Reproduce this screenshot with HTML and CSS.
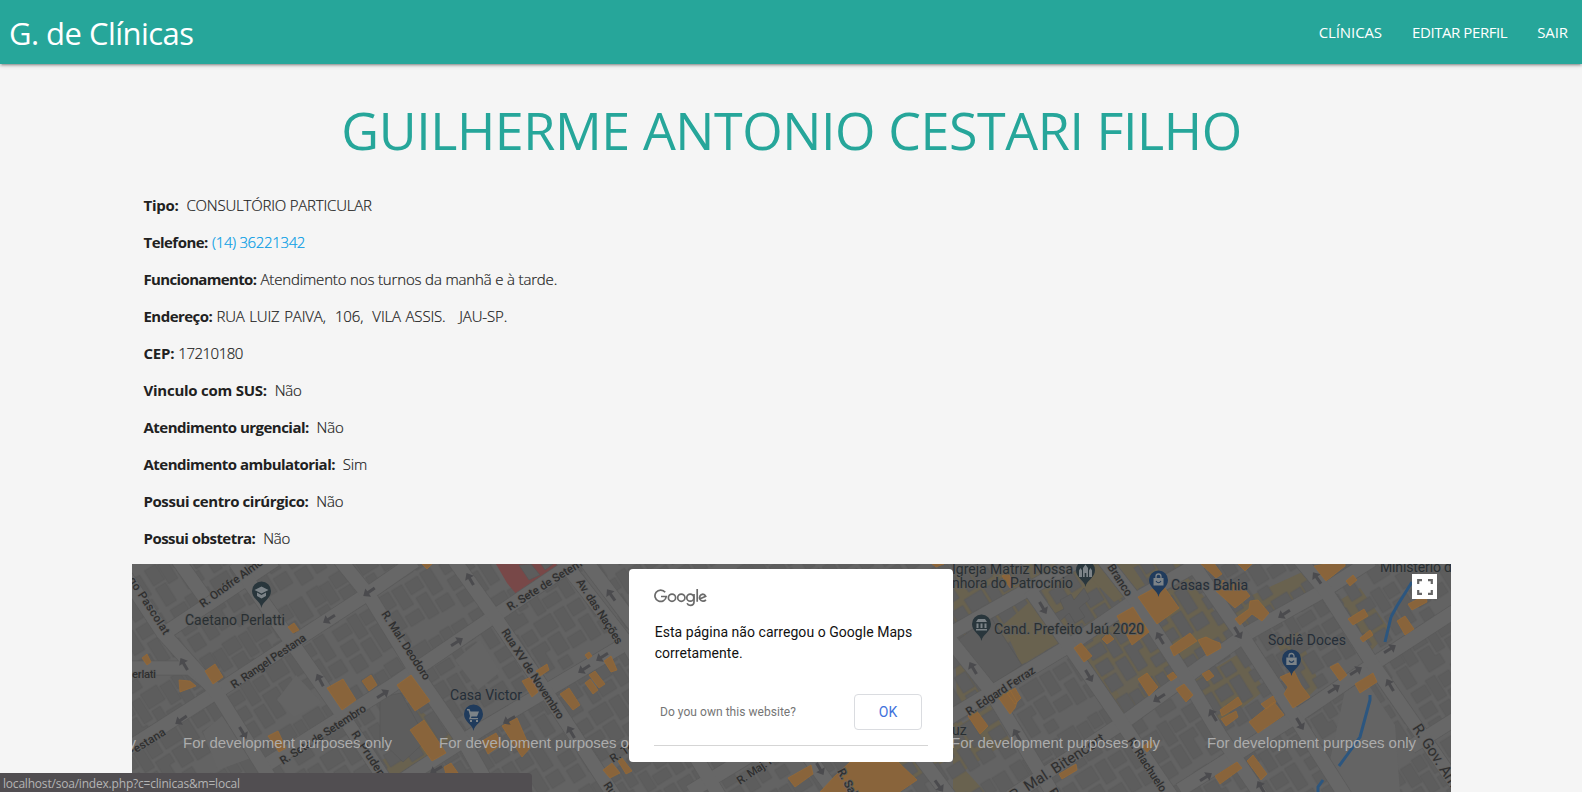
FILE: index.html
```
<!DOCTYPE html>
<html lang="pt-BR">
<head>
<meta charset="utf-8">
<title>G. de Clínicas</title>
<link rel="stylesheet" href="styles.css">
</head>
<body>
<nav class="navbar">
  <a class="brand">G. de Clínicas</a>
  <div class="links"><a class="l1">CLÍNICAS</a><a class="l2">EDITAR PERFIL</a><a class="l3">SAIR</a></div>
</nav>
<main class="container">
  <h2 class="title">GUILHERME ANTONIO CESTARI FILHO</h2>
  <div class="details">
    <p><b class="short">Tipo:</b>&nbsp; <span class="caps">CONSULTÓRIO PARTICULAR</span></p>
    <p><b>Telefone:</b> <a class="phone">(14) 36221342</a></p>
    <p><b class="long">Funcionamento:</b> <span>Atendimento nos turnos da manhã e à tarde.</span></p>
    <p><b>Endereço:</b> <span class="caps address">RUA LUIZ PAIVA,&nbsp; 106,&nbsp; VILA ASSIS. &nbsp; JAU-SP.</span></p>
    <p><b class="short">CEP:</b> <span class="num">17210180</span></p>
    <p><b class="short">Vinculo com SUS:</b>&nbsp; <span>Não</span></p>
    <p><b>Atendimento urgencial:</b>&nbsp; <span>Não</span></p>
    <p><b>Atendimento ambulatorial:</b>&nbsp; <span>Sim</span></p>
    <p><b class="mid">Possui centro cirúrgico:</b>&nbsp; <span>Não</span></p>
    <p><b>Possui obstetra:</b>&nbsp; <span>Não</span></p>
  </div>
  <section class="map">
    <svg class="tiles" viewBox="132 564 1319 228" width="1319" height="228">
      <defs>
        <pattern id="lots" width="126" height="104" patternUnits="userSpaceOnUse" patternTransform="translate(140 570) rotate(-32)">
          <path class="lot" d="M3 3h13v18h-13zM17 5h11v22h-11zM30 2h16v14h-16zM48 4h10v25h-10zM60 2h19v17h-19zM81 5h12v22h-12zM95 3h11v14h-11zM108 4h15v23h-15zM3 24h12v21h-12zM31 19h14v12h5v11h-19zM61 22h10v20h-10zM73 30h17v11h-17zM94 21h11v21h-11zM108 31h13v12h-13zM4 50h17v12h-17zM23 47h11v24h-11zM36 50h13v13h-13zM53 46h20v16h-20zM76 47h12v23h-12zM91 48h15v13h-15zM109 47h12v26h-12zM3 67h15v13h-15zM22 75h12v22h-12zM37 67h17v10h-6v18h-11zM57 66h14v20h-14zM74 76h16v12h-16zM93 66h12v25h-12zM108 78h15v14h-15zM3 84h14v15h-14zM54 90h12v11h-12z"/>
        </pattern>
        <g id="arrow"><path d="M-7-1.5H1V-5L7 0 1 5V1.5H-7z"/></g>
        <path id="pin" d="M0 16C-1 9-9.500 7-9.500-1A9.500 9.500 0 1 1 9.500-1C9.500 7 1 9 0 16z"/>
      </defs>
      <rect class="land" x="132" y="564" width="1319" height="228"/>
      <g class="commercial">
        <path d="M953 575L1030 564H1180L1215 612 1320 564H1368L1325 592 1248 635 1180 680 1120 720 1092 680 1062 647 957 706zM953 730L990 705 1010 740 965 770 985 792H953zM1195 680L1240 653 1265 690 1220 725zM1275 640L1298 632 1320 685 1305 700zM1340 600L1360 588 1390 630 1372 650z"/>
        <path d="M840 792L957 715 975 740 900 792zM382 760L410 745 412 716 420 710 462 745 452 756 425 768 400 780 383 790zM470 750L495 780 488 785 462 755z"/>
      </g>
      <path class="land" d="M1105 672L1125 656 1147 688 1125 705zM1030 605L1060 645 1010 672 990 640z" opacity=".3"/>
      <rect x="132" y="564" width="1319" height="228" fill="url(#lots)"/>
      <path class="park" d="M1003 625L1035 597 1062 641 1021 665zM1080 567L1130 563 1145 585 1114 602z"/>
      <path class="lot" d="M958 640L990 616 1022 665 988 687zM1054 614L1064 609 1060 600 1071 594 1074 600 1084 588 1090 599 1079 608 1085 617 1075 623 1069 613 1059 622zM380 697L401 693 427 740 403 762 380 740z"/>
      <path class="landplain" d="M277 700L296 675 322 703 294 717zM203 732L222 716 251 758 218 770zM1345 690L1366 681 1395 725 1400 792H1350L1330 760zM455 660L480 640 500 672 478 690z"/>
      <path class="hospital" d="M496 564H565L548 577 517 595 507 583z"/>
      <path class="lot" d="M519 565L531 564 540 575 529 580zM541 564H553L545 570z"/>
      <g class="road-edge">
        <path d="M120 668H190L217 690M165 633L275 560M110 760L220 690 363 597 415 561M263 767L390 687 493 617 575 562M380 795L413 773 480 730 627 643 700 600M690 792L953 632 1080 560M830 792L957 713 1067 647 1140 597 1205 560M1010 797L1127 720 1200 667 1248 633 1325 590 1372 560M1180 790L1295 717 1375 663 1455 611M1411 747L1460 716"/>
        <path d="M115 560L163 633 217 693 263 767 280 795M178 560L205 598M235 562L290 640 337 707 395 795M340 560L370 597 423 683 467 747 495 797M454 560L497 620 547 693 615 797M562 560L627 643 720 797M585 560L635 626M800 745L838 797M900 730L950 797M950 640L990 690 1055 797M1030 590L1067 643 1120 720 1172 797M1104 560L1133 597 1183 673 1220 735 1262 797M1190 560L1245 640 1295 717 1346 797M1300 560L1325 590 1372 663 1460 790"/>
      </g>
      <g class="road">
        <path d="M120 668H190L217 690M165 633L275 560M110 760L220 690 363 597 415 561M263 767L390 687 493 617 575 562M380 795L413 773 480 730 627 643 700 600M690 792L953 632 1080 560M830 792L957 713 1067 647 1140 597 1205 560M1010 797L1127 720 1200 667 1248 633 1325 590 1372 560M1180 790L1295 717 1375 663 1455 611M1411 747L1460 716"/>
        <path d="M115 560L163 633 217 693 263 767 280 795M178 560L205 598M235 562L290 640 337 707 395 795M340 560L370 597 423 683 467 747 495 797M454 560L497 620 547 693 615 797M562 560L627 643 720 797M585 560L635 626M800 745L838 797M900 730L950 797M950 640L990 690 1055 797M1030 590L1067 643 1120 720 1172 797M1104 560L1133 597 1183 673 1220 735 1262 797M1190 560L1245 640 1295 717 1346 797M1300 560L1325 590 1372 663 1460 790"/>
      </g>
      <g class="shop">
        <path d="M142 658L147 654 151 662 147 665zM179 680L190 681 196 686 180 692zM205 671L215 664 223 677 213 684zM288 627L294 623 299 630 293 633zM327 688L343 679 356 700 342 710zM362 681L371 675 377 685 369 691zM268 736L278 731 286 748 279 752z"/>
        <path d="M397 685L411 675 430 701 415 711zM410 730L424 720 446 753 432 761zM422 564H432L427 569zM482 741L496 733 502 744 488 754zM502 726L517 718 530 748 522 757zM522 681L531 677 538 692 532 697zM536 671L547 664 549 670 540 676zM560 694L569 688 580 705 573 710zM585 683L590 679 598 690 593 694zM589 675L595 671 605 684 599 688zM604 661L611 656 617 670 611 672zM585 655L589 652 592 656 588 659zM444 767L451 763 458 773 446 774zM603 770L612 763 620 773 610 778zM618 761L622 758 632 771 626 774z"/>
        <path d="M788 778L811 765 813 774 795 787zM820 792L835 776 850 762H898L917 780 895 795zM932 564L944 564 936 567zM968 716L976 710 988 726 980 734zM998 697L1010 690 1017 702 1015 708 1010 714zM1007 693L1015 688 1021 698 1015 704zM1074 648L1081 643 1092 656 1084 662zM1102 639L1108 633 1114 639 1107 644zM1117 616L1133 607 1149 632 1132 645zM1138 597L1162 584 1179 608 1157 624zM1170 647L1190 633 1197 641 1174 656zM1138 679L1147 673 1158 687 1149 696zM1167 676L1173 672 1177 677 1171 681zM1176 689L1184 684 1193 695 1186 702zM1002 576L1008 573 1015 585 1010 588zM1059 774L1076 764 1077 770 1062 779zM1143 747L1151 739 1154 745 1147 752z"/>
        <path d="M1201 564L1213 562 1222 574 1216 578zM1216 591L1223 580 1229 585 1239 582 1250 596 1235 608zM1235 619L1249 609 1250 601 1258 600 1269 613 1262 621 1252 614 1240 625zM1198 640L1206 637 1212 640 1220 643 1221 648 1207 656zM1202 674L1209 670 1214 676 1207 681zM1220 710L1238 697 1242 704 1222 716zM1221 719L1236 711 1238 717 1226 726zM1249 722L1274 702 1284 715 1258 733zM1261 704L1273 696 1276 702 1266 709zM1280 677L1294 671 1301 685 1310 697 1293 708 1284 694 1288 687zM1330 667L1338 663 1347 675 1340 681zM1355 684L1373 673 1377 682 1360 693zM1348 619L1364 609 1368 616 1353 625zM1360 638L1370 630 1373 635 1363 642zM1346 581L1353 575 1357 580 1350 586zM1397 621L1405 616 1414 629 1405 635zM1408 604L1426 595 1427 602 1412 610zM1314 566L1345 561 1345 566 1326 581zM1215 776L1237 762 1242 768 1220 784zM1247 761L1253 755 1267 774 1261 780zM1238 564H1252L1245 571z"/>
      </g>
      <path class="river" d="M1412 582L1397 606 1391 617M1391 617L1385 642M1370 695V700L1360 737 1350 751 1339 766M1323 780L1318 787V792"/>
      <g class="arrows">
        <use href="#arrow" transform="translate(369 592) rotate(145)"/><use href="#arrow" transform="translate(329 619) rotate(148)"/><use href="#arrow" transform="translate(184 664) rotate(-120)"/><use href="#arrow" transform="translate(181 720) rotate(145)"/><use href="#arrow" transform="translate(243 733) rotate(60)"/><use href="#arrow" transform="translate(320 680) rotate(-118)"/><use href="#arrow" transform="translate(383 694) rotate(-32)"/><use href="#arrow" transform="translate(457 642) rotate(-32)"/><use href="#arrow" transform="translate(470 579) rotate(-120)"/><use href="#arrow" transform="translate(611 595) rotate(-125)"/><use href="#arrow" transform="translate(602 657) rotate(148)"/><use href="#arrow" transform="translate(584 669) rotate(148)"/><use href="#arrow" transform="translate(509 720) rotate(150)"/><use href="#arrow" transform="translate(571 732) rotate(-120)"/><use href="#arrow" transform="translate(436 770) rotate(150)"/><use href="#arrow" transform="translate(1043 608) rotate(60)"/><use href="#arrow" transform="translate(973 668) rotate(-120)"/><use href="#arrow" transform="translate(1089 676) rotate(60)"/><use href="#arrow" transform="translate(1160 638) rotate(-120)"/><use href="#arrow" transform="translate(1159 698) rotate(148)"/><use href="#arrow" transform="translate(1017 735) rotate(-120)"/><use href="#arrow" transform="translate(820 769) rotate(60)"/><use href="#arrow" transform="translate(939 786) rotate(55)"/>
        <use href="#arrow" transform="translate(1317 578) rotate(-125)"/><use href="#arrow" transform="translate(1284 614) rotate(148)"/><use href="#arrow" transform="translate(1238 633) rotate(60)"/><use href="#arrow" transform="translate(1390 649) rotate(-32)"/><use href="#arrow" transform="translate(1356 671) rotate(-32)"/><use href="#arrow" transform="translate(1334 689) rotate(-32)"/><use href="#arrow" transform="translate(1390 685) rotate(-120)"/><use href="#arrow" transform="translate(1300 724) rotate(60)"/><use href="#arrow" transform="translate(1213 715) rotate(-120)"/><use href="#arrow" transform="translate(1206 777) rotate(-32)"/><use href="#arrow" transform="translate(1261 787) rotate(-120)"/>
      </g>
      <g class="street">
        <text transform="translate(203 608) rotate(-36)" textLength="75">R. Onófre Alme</text>
        <text transform="translate(128 580) rotate(57)" textLength="66">go Pascolat</text>
        <text x="132" y="678" textLength="24">erlati</text>
        <text transform="translate(234 689) rotate(-34)" textLength="88">R. Rangel Pestana</text>
        <text transform="translate(130 757) rotate(-32)" textLength="43">Pestana</text>
        <text transform="translate(283 765) rotate(-33)" textLength="100">R. Sete de Setembro</text>
        <text transform="translate(351 734) rotate(57)" textLength="56">R. Prudent</text>
        <text transform="translate(381 614) rotate(57)" textLength="80">R. Mal. Deodoro</text>
        <text transform="translate(510 611) rotate(-32)" textLength="86">R. Sete de Setem</text>
        <text transform="translate(576 582) rotate(57)" textLength="75">Av. das Nações</text>
        <text transform="translate(501 632) rotate(57)" textLength="105">Rua XV de Novembro</text>
        <text transform="translate(613 763) rotate(-34)" textLength="56">R. Tenente</text>
        <text transform="translate(603 785) rotate(57)">Rua XV</text>
        <text transform="translate(740 785) rotate(-34)" textLength="65">R. Maj. Prado</text>
        <text transform="translate(837 771) rotate(62)">R. Saldanha</text>
        <text transform="translate(969 716) rotate(-33)" textLength="80">R. Edgard Ferraz</text>
        <text transform="translate(1107 567) rotate(57)" textLength="36">Branco</text>
        <text class="wide" transform="translate(1014 801) rotate(-33)" textLength="110">R. Mal. Bitencort</text>
        <text transform="translate(1127 741) rotate(57)" textLength="62">R. Riachuelo</text>
        <text transform="translate(1049 791) rotate(58)">R. B</text>
        <text class="wide" transform="translate(1412 728) rotate(57)" textLength="77">R. Gov. Arm</text>
      </g>
      <g class="place">
        <text x="185" y="625" textLength="100">Caetano Perlatti</text>
        <text x="450" y="700" textLength="72" class="blue">Casa Victor</text>
        <text x="952" y="574" textLength="121">Igreja Matriz Nossa</text>
        <text x="952" y="588" textLength="121">nhora do Patrocínio</text>
        <text x="994" y="634" textLength="150">Cand. Prefeito Jaú 2020</text>
        <text x="1171" y="590" textLength="77" class="blue">Casas Bahia</text>
        <text x="1268" y="645" textLength="78" class="blue">Sodiê Doces</text>
        <text x="1380" y="572" textLength="72">Ministério d</text>
        <text x="952" y="735">uz</text>
      </g>
      <g class="pins">
        <use href="#pin" x="261.500" y="592"/><use href="#pin" x="1085.500" y="571"/><use href="#pin" x="981.500" y="625"/>
        <g class="pin-blue"><use href="#pin" x="473.500" y="715"/><use href="#pin" x="1158.500" y="581"/><use href="#pin" x="1291.500" y="660"/></g>
        <g class="glyphs">
          <path d="M254.500 590L261.500 586.500 268.500 590 261.500 593.500zM257 592.500V596L261.500 598.500 266 596V592.500L261.500 595z"/>
          <path d="M1079 577V570.500L1080.500 568 1082 570.500V577zM1083 577V568L1085.500 564.500 1088 568V577H1086.300V573H1084.700V577zM1089 577V570.500L1090.500 568 1092 570.500V577z"/>
          <path d="M976 622L978 619H985L987 622zM976.500 623.500H978.500V628H976.500zM980.500 623.500H982.500V628H980.500zM984.500 623.500H986.500V628H984.500zM976 629H987V630.500H976z"/>
          <path d="M467 709H469.500L470.500 711.500H479L477 716.500H471.500L471 718H478V719.300H469L470 716 468.500 710.500H467zM470 720H472V722H470zM476 720H478V722H476z"/>
          <path d="M1153.500 578H1163.500V585.500H1153.500zM1286.300 657.500H1296.700V665H1286.300z"/>
        </g>
        <path class="handle" d="M1156 578V576.500A2.500 2.500 0 0 1 1161 576.500V578M1289 657.500V656A2.500 2.500 0 0 1 1294 656V657.500"/>
        <path class="smile" d="M1156 581Q1158.500 584.500 1161 581M1289 660.700Q1291.500 664 1294 660.700"/>
      </g>
      <g class="watermark">
        <text x="-72" y="748" textLength="208">For development purposes only</text>
        <text x="183" y="748" textLength="209">For development purposes only</text>
        <text x="439" y="748" textLength="209">For development purposes only</text>
        <text x="951" y="748" textLength="209">For development purposes only</text>
        <text x="1207" y="748" textLength="209">For development purposes only</text>
      </g>
    </svg>
    <button class="fullscreen" aria-label="Tela cheia"><svg width="16" height="16" viewBox="0 0 16 16"><path d="M1.200 5V1.200H5M11 1.200H14.800V5M14.800 11V14.800H11M5 14.800H1.200V11"/></svg></button>
    <div class="dialog">
      <svg class="google" width="53" height="18" viewBox="0 0 53 18"><g><path d="M11.200 3.300A5.700 5.700 0 1 0 12.300 7.500H7"/><circle cx="18" cy="8.700" r="3.600"/><circle cx="27.300" cy="8.700" r="3.600"/><circle cx="36.300" cy="8.700" r="3.500"/><path d="M40 5V12.700Q40 16.300 36.400 16.300 33.900 16.300 33.100 14.200M43.200 0V12.700M46.200 9.700L51.700 7.300Q50.800 5.200 48.800 5.200A3.500 3.500 0 1 0 51.900 10.700"/></g></svg>
      <p class="message">Esta página não carregou o Google Maps corretamente.</p>
      <div class="actions"><a class="own">Do you own this website?</a><button class="ok">OK</button></div>
    </div>
  </section>
</main>
<div class="status">localhost/soa/index.php?c=clinicas&amp;m=local</div>
</body>
</html>
```
FILE: styles.css
```
* { box-sizing: border-box; }
body { margin: 0; height: 792px; overflow: hidden; background: #f5f5f5; color: #212121; font: 15px "Open Sans", "Noto Sans", sans-serif; }
.navbar { position: relative; height: 64px; display: flex; justify-content: space-between; align-items: center; padding: 2px 14px 0 9px; background: #26a69a; color: #fff; box-shadow: 0 2px 2px rgba(0,0,0,.14), 0 3px 1px -2px rgba(0,0,0,.12), 0 1px 5px rgba(0,0,0,.2); }
.brand { font-size: 31px; line-height: 60px; letter-spacing: -.54px; white-space: nowrap; }
.links { display: flex; gap: 30px; margin-top: -2px; }
.l1 { letter-spacing: -.1px; }
.l2 { letter-spacing: -.42px; }
.l3 { letter-spacing: -.1px; }
.container { width: 1319px; margin: 0 auto 0 132px; }
.title { margin: 35px 0 27px; height: 61px; line-height: 61px; font-size: 52px; font-weight: 400; letter-spacing: -.43px; color: #26a69a; text-align: center; white-space: nowrap; }
.details { padding: 0 0 7px 11.500px; }
.details p { margin: 0; height: 37px; line-height: 37px; font-weight: 300; letter-spacing: -.16px; white-space: nowrap; -webkit-text-stroke: .2px; }
.details b { font-weight: 700; letter-spacing: -.53px; margin-right: .4px; -webkit-text-stroke: 0; }
.details .short { letter-spacing: -.25px; }
.details .mid { letter-spacing: -.42px; }
.details .long { letter-spacing: -.65px; }
.details .caps { letter-spacing: -.2px; }
.details .address { word-spacing: .8px; letter-spacing: -.14px; }
.num { letter-spacing: -.48px; }
.phone { color: #039be5; letter-spacing: -.35px; }
.map { position: relative; height: 228px; overflow: hidden; background: #606060; }
.tiles { display: block; }
.land { fill: #636363; }
.landplain { fill: #646464; }
.lot { fill: #5d5d5d; stroke: #565656; stroke-width: .6; }
.commercial, .park { fill: #69624f; }
.hospital { fill: #784848; }
.road-edge { fill: none; stroke: #5b5b5b; stroke-width: 15; }
.road { fill: none; stroke: #676767; stroke-width: 13.500; }
.shop { fill: #89643b; stroke: #9a6a33; stroke-width: .7; }
.river { fill: none; stroke: #2c567f; stroke-width: 3; }
.arrows { fill: #4b4b4e; }
.street { font: 500 11.500px Roboto, sans-serif; fill: #2f2f2f; stroke: #626262; stroke-width: 1.500px; paint-order: stroke; }
.street .wide { font-size: 15px; font-weight: 400; }
.place { font: 14px Roboto, sans-serif; fill: #292f32; stroke: #5f5f5f; stroke-width: 1.5px; paint-order: stroke; }
.place .blue { fill: #252e38; }
.pins { fill: #29363c; stroke: none; }
.pin-blue { fill: #203b5c; }
.glyphs { fill: #7c8388; }
.handle { fill: none; stroke: #7c8388; stroke-width: 1.3; }
.smile { fill: none; stroke: #203b5c; stroke-width: 1.2; }
.watermark { font: 15px "Liberation Sans", Arial, sans-serif; fill: #acacac; }
.fullscreen { position: absolute; top: 10px; right: 14px; width: 25px; height: 25px; border: 0; padding: 0; background: #fff; display: grid; place-items: center; }
.fullscreen path { fill: none; stroke: #666; stroke-width: 2.200; }
.dialog { position: absolute; left: 497px; top: 5px; width: 324px; height: 193px; padding: 20px 25px 0; border-radius: 4px; background: #fff; font-family: Roboto, sans-serif; }
.google { display: block; margin-left: .3px; }
.google g { fill: none; stroke: #6a6a6a; stroke-width: 1.700; }
.message { margin: 15px 0 14px; padding-left: .7px; font-size: 14px; line-height: 21px; color: #111; letter-spacing: .04px; }
.actions { display: flex; align-items: center; justify-content: space-between; height: 68px; padding: 0 6px 0 6px; border-bottom: 1px solid #d5d5d5; }
.own { font-size: 12px; color: #757575; letter-spacing: .04px; }
.ok { width: 68px; height: 36px; padding: 0; border: 1px solid #dadce0; border-radius: 4px; background: #fff; color: #3f72dc; font: 14px Roboto, sans-serif; }
.status { position: absolute; left: 0; top: 773px; width: 532px; height: 19px; padding-left: 3px; border-radius: 0 4px 0 0; background: #514e51; color: #b4b4b4; font: 12px/21px "Open Sans", sans-serif; letter-spacing: -.2px; }
```
